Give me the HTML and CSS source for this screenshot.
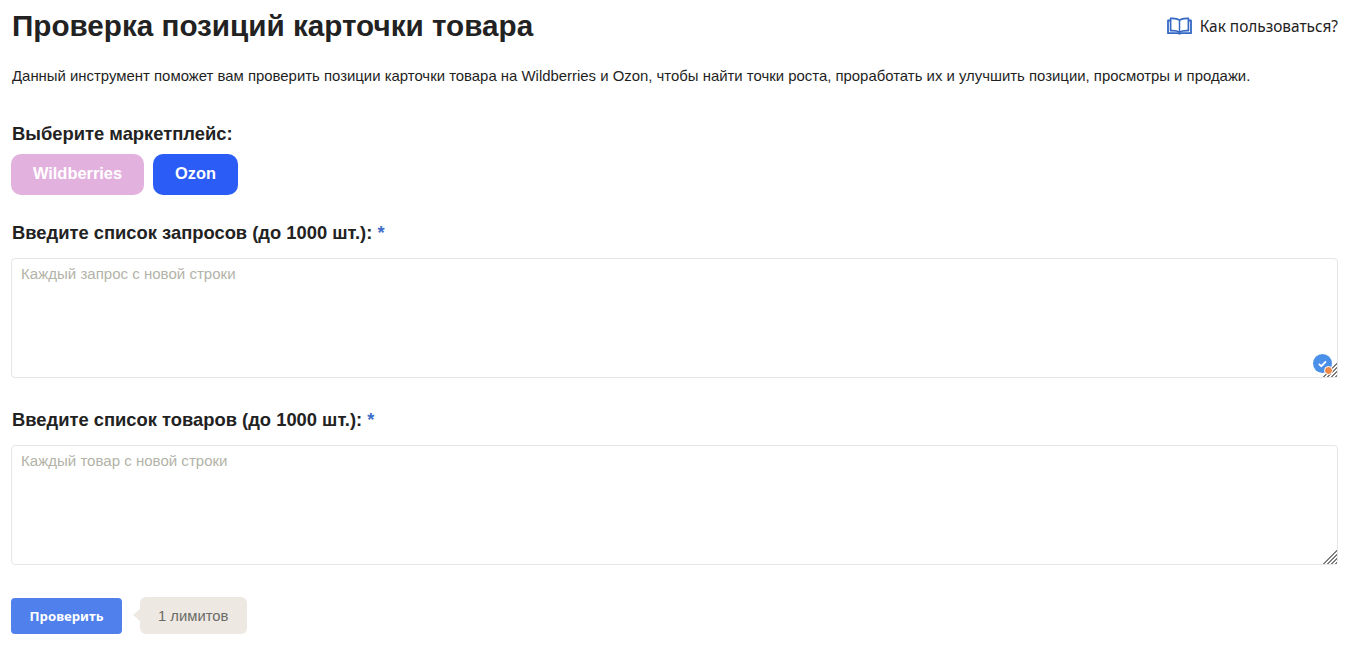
FILE: index.html
```html
<!DOCTYPE html>
<html lang="ru">
<head>
<meta charset="utf-8">
<title>Проверка позиций карточки товара</title>
<link rel="stylesheet" href="styles.css">
</head>
<body>
<main class="page">
  <header class="head">
    <h1 class="title">Проверка позиций карточки товара</h1>
    <a class="help" href="#">
      <svg class="help-icon" width="25" height="18" viewBox="0 0 25 18" fill="none">
        <path d="M12.5 3.2C10.5 1.6 7.5 1.2 3.6 1.4V13.6C7.5 13.4 10.5 13.8 12.5 15.2C14.5 13.8 17.5 13.4 21.4 13.6V1.4C17.5 1.2 14.5 1.6 12.5 3.2Z" fill="#fff" stroke="#3568c4" stroke-width="1.7" stroke-linejoin="round"/>
        <path d="M12.5 3.2V15.2" stroke="#3568c4" stroke-width="1.5"/>
        <path d="M3.6 3.5H1V16.2H10.6C11.4 16.2 11.9 16.8 12.5 16.8C13.1 16.8 13.6 16.2 14.4 16.2H24V3.5H21.4" stroke="#3568c4" stroke-width="1.8" stroke-linejoin="round"/>
      </svg>
      <span class="help-text">Как пользоваться?</span>
    </a>
  </header>
  <p class="lead">Данный инструмент поможет вам проверить позиции карточки товара на Wildberries и Ozon, чтобы найти точки роста, проработать их и улучшить позиции, просмотры и продажи.</p>
  <h2 class="label label-market">Выберите маркетплейс:</h2>
  <div class="markets">
    <button class="market market-wb" type="button">Wildberries</button>
    <button class="market market-ozon" type="button">Ozon</button>
  </div>
  <h2 class="label label-field">Введите список запросов (до 1000 шт.): <span class="req">*</span></h2>
  <div class="field">
    <textarea class="area" placeholder="Каждый запрос с новой строки"></textarea>
    <span class="check">
      <svg width="19" height="19" viewBox="0 0 19 19"><circle cx="9.5" cy="9.5" r="9.5" fill="#4a90e8"/><path d="M5.8 9.8L8.3 12.2L13 7.3" fill="none" stroke="#fff" stroke-width="1.7"/></svg>
      <i class="dot"></i>
    </span>
  </div>
  <h2 class="label label-field label-second">Введите список товаров (до 1000 шт.): <span class="req">*</span></h2>
  <div class="field">
    <textarea class="area" placeholder="Каждый товар с новой строки"></textarea>
  </div>
  <div class="actions">
    <button class="submit" type="button">Проверить</button>
    <div class="limits">1 лимитов</div>
  </div>
</main>
</body>
</html>
```
FILE: styles.css
```css
* { box-sizing: border-box; }
html, body { margin: 0; background: #fff; }
body { font-family: "Liberation Sans", Arial, sans-serif; color: #1f1f1f; }
.page { padding: 0 13px 0 11px; }
.head { display: flex; justify-content: space-between; align-items: center; height: 51px; }
.title { margin: 0 0 0 1px; font-size: 29.65px; line-height: 51px; font-weight: 700; color: #222; }
.help { display: flex; align-items: center; gap: 8px; font-family: "Noto Sans", sans-serif; font-size: 15.4px; color: #222; text-decoration: none; }
.help-text { padding-top: 2px; }
.lead { margin: 14px 0 0 1px; font-size: 14.92px; line-height: 21px; color: #1f1f1f; }
.label { margin: 0 0 0 1px; font-size: 18.36px; line-height: 24px; font-weight: 700; color: #222; }
.label-market { margin-top: 36px; }
.markets { display: flex; gap: 9px; margin-top: 8px; }
.market { height: 41px; padding: 0 0 2px; border: 0; border-radius: 10px; color: #fff; font: 700 16.4px "Liberation Sans", Arial, sans-serif; }
.market-wb { width: 133px; background: #e3b1de; }
.market-ozon { width: 85px; background: #2b5cf6; }
.label-field { margin-top: 26px; }
.label-second { margin-top: 30px; }
.req { color: #3f6fc9; }
.field { position: relative; margin-top: 13px; }
.area { display: block; width: 100%; height: 120px; padding: 7px 9px; border: 1px solid #e6e6e6; border-radius: 4px; font: 15.05px/16px "Liberation Sans", Arial, sans-serif; color: #222; outline: 0; resize: vertical; }
.area::placeholder { color: #b3b3a8; opacity: 1; }
.area::-webkit-resizer { background: linear-gradient(to bottom right, #fff 50%, transparent 50%), repeating-linear-gradient(135deg, #7d7d7d 0 1px, #fff 1px 2.8px); }
.check { position: absolute; right: 6px; bottom: 5px; width: 19px; height: 19px; }
.check svg { display: block; }
.dot { position: absolute; right: -1px; bottom: -2px; width: 9px; height: 9px; border-radius: 50%; background: #ee8a4a; border: 1px solid #fff; }
.actions { display: flex; align-items: center; margin-top: 32px; }
.submit { width: 111px; height: 36px; border: 0; border-radius: 4px; background: #4f80ec; color: #fff; font: 700 13.2px "Noto Sans", sans-serif; }
.limits { position: relative; display: flex; align-items: center; margin-left: 18px; height: 37px; padding: 0 19px 0 18px; border-radius: 6px; background: #ede8e2; color: #6b6b66; font-size: 14.8px; }
.limits::before { content: ""; position: absolute; left: -7px; top: 12px; border-style: solid; border-width: 6.5px 7px 6.5px 0; border-color: transparent #ede8e2 transparent transparent; }
```
